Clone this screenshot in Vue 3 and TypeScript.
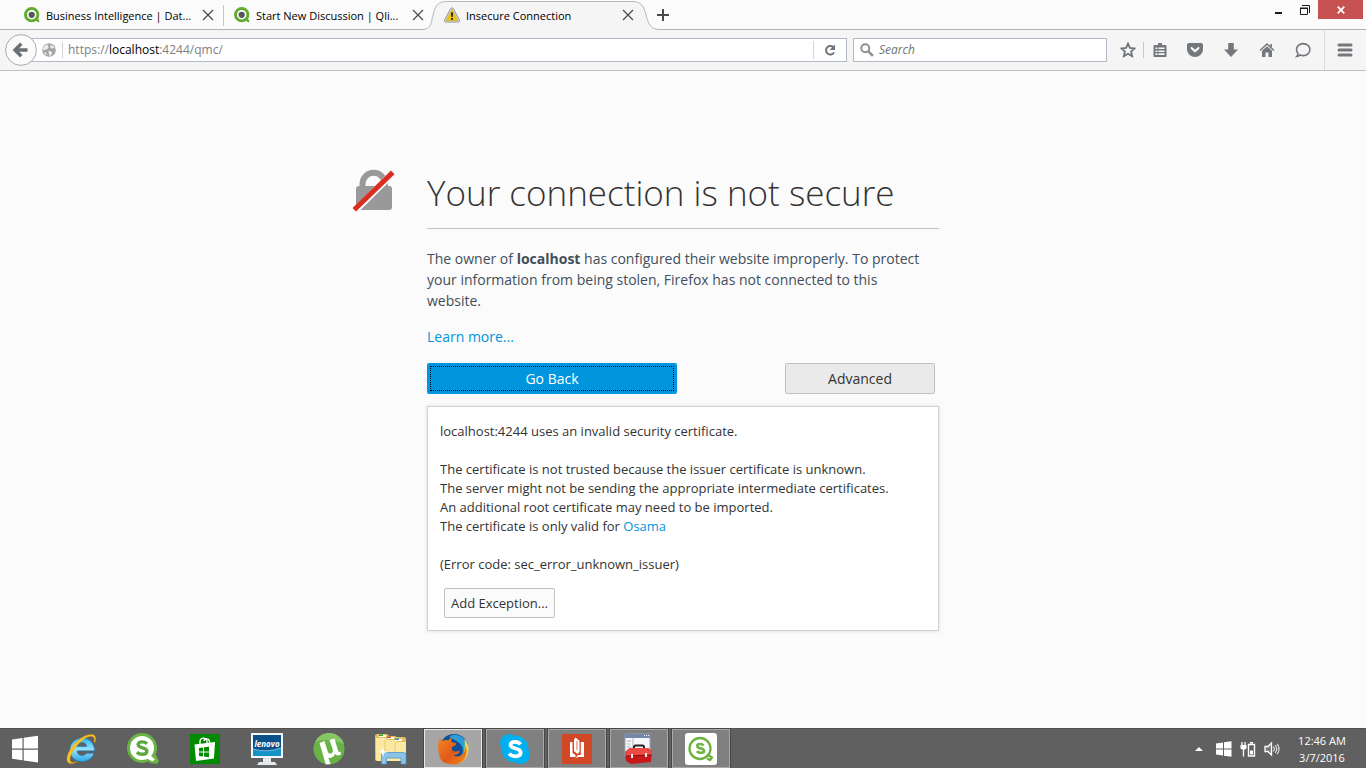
<script setup lang="ts">
import { ref } from 'vue'

interface Tab {
  title: string
  icon: 'qlik' | 'warning'
  active: boolean
}

const tabs: Tab[] = [
  { title: 'Business Intelligence | Dat...', icon: 'qlik', active: false },
  { title: 'Start New Discussion | Qli...', icon: 'qlik', active: false },
  { title: 'Insecure Connection', icon: 'warning', active: true },
]

const address = ref('https://localhost:4244/qmc/')
const editing = ref(false)
const query = ref('')
const showDetails = ref(true)

const apps: { name: string; state: 'idle' | 'open' | 'current' }[] = [
  { name: 'Internet Explorer', state: 'idle' },
  { name: 'Qlik Sense', state: 'idle' },
  { name: 'Store', state: 'idle' },
  { name: 'Lenovo', state: 'idle' },
  { name: 'uTorrent', state: 'idle' },
  { name: 'File Explorer', state: 'idle' },
  { name: 'Firefox', state: 'current' },
  { name: 'Skype', state: 'open' },
  { name: 'Reader', state: 'open' },
  { name: 'Toolbox', state: 'open' },
  { name: 'Qlik Sense Desktop', state: 'open' },
]
</script>

<template>
  <div class="window">
    <header class="tabstrip">
      <div class="tabs">
        <div v-for="tab in tabs" :key="tab.title" class="tab" :class="{ active: tab.active }">
          <svg v-if="tab.active" class="tab-shape" width="240" height="30" viewBox="0 0 240 30" aria-hidden="true">
            <path d="M2 30V29.5C12 29.5 11 22 13 15C15 6 18 1.5 27 1.5H212C221 1.5 224 6 226 15C228 22 230 29.5 239 29.5V30Z" fill="#f5f5f5" />
            <path d="M2 29.5C12 29.5 11 22 13 15C15 6 18 1.5 27 1.5H212C221 1.5 224 6 226 15C228 22 230 29.5 239 29.5" fill="none" stroke="#b1b9bf" />
          </svg>
          <svg v-if="tab.icon === 'qlik'" class="favicon" width="16" height="16" viewBox="0 0 16 16" aria-hidden="true">
            <circle cx="7.7" cy="7.7" r="6.2" fill="#fff" stroke="#62ac32" stroke-width="2.9" />
            <path d="M11 13.2l2.5-2.2 2 3-.8 1.5z" fill="#62ac32" />
            <circle cx="7.7" cy="7.8" r="3.1" fill="#575756" />
          </svg>
          <svg v-else class="favicon" width="16" height="16" viewBox="0 0 16 16" aria-hidden="true">
            <path d="M8 .8c.7 0 1.1.4 1.5 1l5.900 11c.6 1.300 0 2.300-1.200 2.300H1.800C.6 15.100 0 14.100.6 12.800l5.900-11c.4-.6.8-1 1.500-1z" fill="#d9d9d9" stroke="#858585" stroke-width=".8" />
            <path d="M8 2.700L13.800 13.600H2.200z" fill="#f2c80e" stroke="#c79a00" stroke-width=".5" />
            <path d="M7 5.500h2l-.4 4.500H7.400zM7.100 11h1.800v1.700H7.100z" fill="#111" />
          </svg>
          <span class="tab-title">{{ tab.title }}</span>
          <button class="tab-close" :aria-label="`Close ${tab.title}`">
            <svg width="12" height="12" viewBox="0 0 12 12"><path d="M1 1l10 10M11 1L1 11" stroke="#4d4d4d" stroke-width="1.300" /></svg>
          </button>
        </div>
        <button class="new-tab" aria-label="New tab">
          <svg width="14" height="14" viewBox="0 0 14 14"><path d="M7 1v12M1 7h12" stroke="#4a4a4a" stroke-width="2" /></svg>
        </button>
      </div>
      <div class="window-buttons">
        <button class="min" aria-label="Minimize">
          <svg width="10" height="12" viewBox="0 0 10 12"><path d="M1 8h7v2H1z" fill="#1c1c1c" /></svg>
        </button>
        <button class="restore" aria-label="Restore">
          <svg width="12" height="12" viewBox="0 0 12 12"><path d="M3 1.500h7.500V9" fill="none" stroke="#1c1c1c" /><path d="M1.500 4.500h7v6h-7z" fill="none" stroke="#1c1c1c" /><path d="M1 3.500h8v1.500H1z" fill="#1c1c1c" /></svg>
        </button>
        <button class="close" aria-label="Close window">
          <svg width="8" height="8" viewBox="0 0 8 8"><path d="M.7.7l6.600 6.600M7.300.7L.7 7.300" stroke="#fff" stroke-width="1.800" /></svg>
        </button>
      </div>
    </header>

    <nav class="toolbar" aria-label="Navigation">
      <button class="back" aria-label="Back">
        <svg width="32" height="32" viewBox="0 0 32 32"><circle cx="16" cy="16" r="15.400" fill="#fbfbfb" stroke="#a3abb2" /><path d="M22.500 16H11M16.300 9.800L10 16l6.300 6.200" fill="none" stroke="#6a7076" stroke-width="3.400" /></svg>
      </button>
      <div class="urlbar">
        <svg class="globe" width="14" height="14" viewBox="0 0 14 14" aria-hidden="true"><circle cx="7" cy="7" r="6.800" fill="#a4a4a4" /><path d="M2 3.500C3.300 2 5 1.200 6.300 1.500L5.500 3l1.400 1.200-1.700 2-2 .3L1.500 7.700 1 5.500zM8.500 2l2.500.8 1.700 2.700-1.500-.5-1.700.7L8.200 4zM6.500 8l2.600.2 1.200 1.600-1.500 2.800-1.500.2-.5-2.300zM2 9l2.300.8.7 2.300L3 11.200z" fill="#ededed" /></svg>
        <div class="address">
          <div v-if="!editing" class="address-view" aria-hidden="true">https://<b>localhost</b>:4244/qmc/</div>
          <input v-model="address" class="address-input" :class="{ editing }" type="text" aria-label="Address" @focus="editing = true" @blur="editing = false" />
        </div>
        <button class="reload" aria-label="Reload">
          <svg width="14" height="14" viewBox="0 0 14 14"><path d="M11 9.500A4.300 4.300 0 1 1 10.200 4" fill="none" stroke="#6e7479" stroke-width="2" /><path d="M12 1.500V7H6.600z" fill="#6e7479" /></svg>
        </button>
      </div>
      <label class="search">
        <svg width="14" height="14" viewBox="0 0 14 14" aria-hidden="true"><circle cx="5.300" cy="5.300" r="4" fill="none" stroke="#909090" stroke-width="2" /><path d="M8.300 8.300l4.600 4.600" stroke="#909090" stroke-width="2.600" /></svg>
        <input v-model="query" type="search" placeholder="Search" aria-label="Search" />
      </label>
      <div class="tools">
        <button class="tool star" aria-label="Bookmark this page">
          <svg width="16" height="16" viewBox="0 0 16 16"><path d="M8 1.600l1.900 4.300 4.700.5-3.500 3.100 1 4.700L8 11.800l-4.100 2.400 1-4.700L1.400 6.400l4.700-.5z" fill="none" stroke="#717579" stroke-width="1.800" /></svg>
        </button>
        <button class="tool list" aria-label="Bookmarks">
          <svg width="16" height="16" viewBox="0 0 16 16"><path d="M6 1h4v2h3.500Q14.500 3 14.500 4v10q0 1-1 1h-11q-1 0-1-1V4q0-1 1-1H6z" fill="#74787d" /><path d="M3.500 5.500h2v1.600h-2zM6.500 5.500h6v1.600h-6zM3.500 8.400h2V10h-2zM6.500 8.400h6V10h-6zM3.500 11.300h2v1.600h-2zM6.500 11.300h6v1.600h-6z" fill="#f6f6f6" /></svg>
        </button>
        <button class="tool" aria-label="Save to Pocket">
          <svg width="16" height="16" viewBox="0 0 16 16"><path d="M2 1h12q2 0 2 2v4.500a8 7.500 0 0 1-16 0V3Q0 1 2 1z" fill="#74787d" /><path d="M4.500 6L8 9.300 11.500 6" fill="none" stroke="#fff" stroke-width="2" stroke-linecap="round" stroke-linejoin="round" /></svg>
        </button>
        <button class="tool" aria-label="Downloads">
          <svg width="16" height="16" viewBox="0 0 16 16"><path d="M5.200 1h5.600v6.500H15L8 15 1 7.500h4.200z" fill="#74787d" /></svg>
        </button>
        <button class="tool" aria-label="Home">
          <svg width="16" height="16" viewBox="0 0 16 16"><path d="M1 8.500L8 2l7 6.500" fill="none" stroke="#74787d" stroke-width="1.500" /><path d="M8 4.300l5 4.500V15H9.500v-4.500h-3V15H3V8.800z" fill="#74787d" /><path d="M11.300 2H13v3.500L11.300 4z" fill="#74787d" /></svg>
        </button>
        <button class="tool" aria-label="Hello">
          <svg width="16" height="16" viewBox="0 0 16 16"><path d="M8.200 1.600c3.800 0 6.700 2.600 6.700 6s-2.900 6-6.700 6c-1.200 0-2.200-.3-3.100-.7-.8.900-1.900 1.500-3.400 1.600.8-.9 1.200-1.900 1.300-3C2 10.500 1.500 9.100 1.500 7.600c0-3.400 2.900-6 6.700-6z" fill="none" stroke="#74787d" stroke-width="1.600" /></svg>
        </button>
        <button class="tool menu" aria-label="Open menu">
          <svg width="16" height="16" viewBox="0 0 16 16"><path d="M2 3h12M2 8h12M2 13h12" stroke="#74787d" stroke-width="3" stroke-linecap="round" /></svg>
        </button>
      </div>
    </nav>

    <main class="page">
      <section class="notice">
        <div class="heading">
          <svg class="lock" width="44" height="44" viewBox="0 0 44 44" aria-hidden="true">
            <path d="M10.500 20V15a11.200 11.200 0 0 1 22.400 0v5" fill="none" stroke="#999" stroke-width="6" />
            <rect x="4" y="17" width="36" height="24" rx="3" fill="#999" />
            <path d="M-.5 40.500L40 0l5 5L4.500 45z" fill="#fbfbfb" />
            <path d="M.5 39L39 1.500 42.500 5.300 4 42.500z" fill="#d92d21" />
          </svg>
          <h1>Your connection is not secure</h1>
        </div>
        <p class="intro">The owner of <b>localhost</b> has configured their website improperly. To protect your information from being stolen, Firefox has not connected to this website.</p>
        <p class="more"><a href="#learn">Learn more...</a></p>
        <div class="actions">
          <button class="go-back">Go Back</button>
          <button class="advanced" @click="showDetails = !showDetails">Advanced</button>
        </div>
        <div v-if="showDetails" class="details">
          <p>localhost:4244 uses an invalid security certificate.</p>
          <p>
            The certificate is not trusted because the issuer certificate is unknown.<br />
            The server might not be sending the appropriate intermediate certificates.<br />
            An additional root certificate may need to be imported.<br />
            The certificate is only valid for <a href="#osama">Osama</a>
          </p>
          <p>(Error code: sec_error_unknown_issuer)</p>
          <button class="exception">Add Exception...</button>
        </div>
      </section>
    </main>

    <footer class="taskbar">
      <button class="start" aria-label="Start">
        <svg width="28" height="28" viewBox="0 0 28 28"><path d="M1 4.500l10.500-1.600v10.600H1zM12.700 2.700L27 .7v12.800H12.700zM1 14.700h10.500v10.600L1 23.700zM12.700 14.700H27v12.800l-14.300-2z" fill="#fff" /></svg>
      </button>
      <div class="apps">
        <button v-for="app in apps" :key="app.name" class="app" :class="app.state" :aria-label="app.name">
          <svg v-if="app.name === 'Internet Explorer'" width="32" height="32" viewBox="0 0 32 32">
            <defs><linearGradient id="ie" x1="0" y1="0" x2="0" y2="1"><stop offset="0" stop-color="#2fb4ed" /><stop offset=".5" stop-color="#9be3fc" /><stop offset="1" stop-color="#29a7e5" /></linearGradient></defs>
            <path d="M29.500 17.800H12c.2 3 2.200 4.800 4.900 4.800 2 0 3.500-.8 4.400-2.300h7.600c-1.700 5-6 8.200-12 8.200C9.800 28.500 5 23.700 5 17S9.900 5 17 5s12.500 4.900 12.500 12.800zM12.200 13.500h9.600c-.3-2.500-2.200-4-4.700-4s-4.400 1.500-4.900 4z" fill="url(#ie)" stroke="#1682bf" stroke-width=".6" fill-rule="evenodd" />
            <path d="M30 9.500c1.300-4.500.5-7.500-2.500-8C22 .7 13.500 5.500 8 12.500 2.500 19.500.5 26.500 3 29.300c1.900 2.200 5.500 1.300 9.300-.9-3.400 1.300-5.700 1.400-6.700.1-1.700-2.300.5-8.500 5.600-15C16.500 7 22.800 2.900 26.500 3.300c2.500.3 3.400 2.500 2.600 5.700z" fill="#f7c228" stroke="#d89a0c" stroke-width=".4" />
          </svg>
          <svg v-else-if="app.name === 'Qlik Sense'" width="32" height="32" viewBox="0 0 32 32">
            <circle cx="15" cy="15" r="15" fill="#68b545" /><path d="M19 25l8-7 5 10-2 3-7-1z" fill="#68b545" />
            <circle cx="15" cy="15" r="12" fill="#fff" /><path d="M22 21l6 5.500-2.500 2L19 25z" fill="#fff" />
            <path d="M20 10.800c-1.500-1.300-3.200-1.900-5-1.900-2.400 0-3.900 1-3.900 2.700 0 4.400 8.800 2 8.800 6.600 0 2-1.800 3-4.500 3-2.200 0-4.200-.7-5.500-2" fill="none" stroke="#5fa83f" stroke-width="3.400" />
          </svg>
          <svg v-else-if="app.name === 'Store'" width="30" height="30" viewBox="0 0 30 30">
            <path d="M0 0h30v30H0z" fill="#008a00" /><path d="M4.500 10.500L25 8l-1 16.500L6 27z" fill="#fff" /><path d="M10 11V7.500q0-3 3-3.300Q16.500 4 17 7v3M14 7q.5-2.500 3-2.200 2.300.2 2.500 3v1" fill="none" stroke="#fff" stroke-width="1.300" />
            <path d="M9 14l4-.5v4H9zM14 13.300l5-.6v4.800h-5zM9 18.500h4v4l-4-.4zM14 18.500h5v4.800l-5-.7z" fill="#008a00" />
          </svg>
          <svg v-else-if="app.name === 'Lenovo'" width="32" height="32" viewBox="0 0 32 32">
            <path d="M0 0h32v25H0z" fill="#f4f7f9" /><path d="M2 2h28v21H2z" fill="#0a5089" /><path d="M2 16q14 4 28-1v8H2z" fill="#1592c8" /><path d="M2 16q14 4 28-1" fill="none" stroke="#9fd4ee" stroke-width=".7" />
            <path d="M12 25h8v4h4l2 3H6l2-3h4z" fill="#e5e8ea" />
            <text x="16" y="14" text-anchor="middle" fill="#fff" class="brand">lenovo</text>
          </svg>
          <svg v-else-if="app.name === 'uTorrent'" width="32" height="32" viewBox="0 0 32 32">
            <circle cx="16" cy="16" r="15.500" fill="#67b346" /><path d="M2 9A15.500 15.500 0 0 1 31 11Q16 4 2 9z" fill="#87c665" />
            <path d="M6.500 10l5-2 3 10q1 3.300 3.600 2.500 2.500-.9 1.500-4.500L16.500 7l5-1.500 3.500 12q.7 2 2.500 1.300l.5 2.500q-3.800 2.500-6-.3-.7 3-3.700 3.700-2 .5-3-.2l2.300 6.500-4.800.5z" fill="#fff" />
          </svg>
          <svg v-else-if="app.name === 'File Explorer'" width="32" height="32" viewBox="0 0 32 32">
            <path d="M0 3q0-2 2-2h10l2 2h6l2 1h7q2 0 2 2v20q0 2-2 2H2q-2 0-2-2z" fill="#e3bf60" />
            <path d="M4 2h7v2H4zM12 4h7v2h-7zM20 6h7v2h-7z" fill="#fff" /><path d="M4 1.500h4V3H4z" fill="#28a745" /><path d="M12 3.500h4V5h-4z" fill="#d8402f" /><path d="M20 5.500h4V7h-4z" fill="#3388ce" />
            <path d="M1 5h9l2 2h7l2 2h10v17q0 2-2 2H3q-2 0-2-2z" fill="#fbe9a2" /><path d="M10 7v19M20 9v17" stroke="#e8cb7a" />
            <path d="M6.500 31V22q0-2.500 2.500-2.500h19.500q2.500 0 2.500 2.500v9h-5v-6H11.500v6z" fill="#8bc4e8" stroke="#4c97c8" stroke-width=".8" />
            <path d="M8 14l1 4 4 1-4 1-1 4-1-4-4-1 4-1z" fill="#fff" />
          </svg>
          <svg v-else-if="app.name === 'Firefox'" width="32" height="32" viewBox="0 0 32 32">
            <defs><linearGradient id="fx" x1="0" y1="0" x2="1" y2="1"><stop offset="0" stop-color="#f08a1d" /><stop offset=".55" stop-color="#e2581a" /><stop offset="1" stop-color="#f08c1c" /></linearGradient></defs>
            <circle cx="17" cy="15" r="14" fill="#114f96" /><path d="M12 3.500Q18 0 25 4q6 5 5 14l-5 5q3-10-4-14z" fill="#2a9fd8" />
            <path d="M27.500 6q4 4.500 4 10.500c-.3 8.500-6.500 14.500-15 14.500q11-5 11-15 .8-5 0-10z" fill="#fbd648" />
            <path d="M2.500 5.500Q4 5 5.500 8q3-1.500 6-.7 2-2.800 4.200-3-1.700 2-1.500 4.300 1 1.400 5 1.500.3 2-3.700 3.600-1.500 2.300.2 4 2.300 1.600 5.300.3 1.700-.2 1.700 1.100-2 3-6.200 3.100 5 3 9.500-1.500 3-3.500 2-8.200 2.500 4.500 1 9.500-2 7-9 9.200-13 1.500-17-6Q-.5 14 2.500 5.500z" fill="url(#fx)" />
          </svg>
          <svg v-else-if="app.name === 'Skype'" width="32" height="32" viewBox="0 0 32 32">
            <circle cx="10" cy="10" r="9" fill="#00aff0" /><circle cx="22" cy="22" r="9" fill="#00aff0" /><circle cx="16" cy="16" r="13.500" fill="#00aff0" />
            <path d="M21.500 11.300c-1.300-1.700-3.200-2.500-5.500-2.500-2.700 0-4.500 1.200-4.500 3 0 4.900 10.200 2.400 10.200 7.800 0 2.300-2.200 3.700-5.400 3.700-2.700 0-4.800-1-6-2.900" fill="none" stroke="#fff" stroke-width="3.800" />
          </svg>
          <svg v-else-if="app.name === 'Reader'" width="30" height="30" viewBox="0 0 30 30">
            <path d="M0 0h30v30H0z" fill="#d24726" /><path d="M8 8h2.500v11l3 2v2H8zM12 5.500l1.500-2 4 3.500v11l-2 2-3.500-3zM18.800 8H22v15h-6l-2.800 1.800 2.800-3.800h2.800z" fill="#fff" /><path d="M15 7v9" stroke="#d24726" stroke-width=".8" />
          </svg>
          <svg v-else-if="app.name === 'Toolbox'" width="32" height="32" viewBox="0 0 32 32">
            <path d="M2 1h25v22H2z" fill="#f5f7fa" stroke="#9ba6b5" /><path d="M2 1h25v4H2z" fill="#7489aa" /><path d="M21 2h1v1h-1zM23 2h1v1h-1zM25 2h1v1h-1z" fill="#fff" /><path d="M4 8h4M4 11h3M4 14h4M4 17h3M10 5v17" stroke="#aeb5bf" />
            <path d="M11 16v-2q0-1.500 1.500-1.500h7q1.500 0 1.500 1.500v2" fill="none" stroke="#222" stroke-width="2" />
            <path d="M2 19l5-4h18l4 3-1 11-20 2-5-3z" fill="#c91819" /><path d="M2 19l5-4h18l4 3v4L3 23z" fill="#ed4945" /><path d="M3 23l26-1" stroke="#8e1010" /><path d="M8 21h2v4H8zM22 20h2v4h-2z" fill="#eee" />
          </svg>
          <svg v-else width="32" height="32" viewBox="0 0 32 32">
            <rect width="32" height="32" rx="3" fill="#fff" /><circle cx="15" cy="15.500" r="10.500" fill="none" stroke="#6cb33f" stroke-width="2.300" /><path d="M21 23l3-.5 3 2-2 2.500-3-1.500" fill="none" stroke="#6cb33f" stroke-width="2.200" />
            <path d="M18.700 12.300c-2.100-1.700-6.400-1.800-6.400.6 0 3.400 6.800 1.700 6.800 4.900 0 2.600-4.900 2.600-7.300.4" fill="none" stroke="#6cb33f" stroke-width="2.600" />
          </svg>
        </button>
      </div>
      <div class="tray">
        <button class="more-icons" aria-label="Show hidden icons"><svg width="8" height="16" viewBox="0 0 8 16"><path d="M0 10l4-4 4 4z" fill="#fff" /></svg></button>
        <button aria-label="Windows"><svg width="16" height="16" viewBox="0 0 16 16"><path d="M0 2.500l7-1v6H0zM8 1.300L15.500.2v7.300H8zM0 8.500h7v6l-7-1zM8 8.500h7.500v7.300L8 14.700z" fill="#fff" /></svg></button>
        <button aria-label="Battery"><svg width="16" height="16" viewBox="0 0 16 16"><path d="M2 1v3M5 1v3M3.500 8v7.500" stroke="#fff" stroke-width="1.300" /><path d="M.5 4h6v3.500l-1.500 1H2L.5 7.500z" fill="#fff" /><path d="M8.500 3.500h6v11.500h-6zM10 1.800h3" fill="none" stroke="#fff" stroke-width="1.400" /><path d="M10 9.500h3v4h-3z" fill="#fff" /></svg></button>
        <button aria-label="Volume"><svg width="16" height="16" viewBox="0 0 16 16"><path d="M1 5.500h3L7.500 2v12L4 10.500H1z" fill="#777" stroke="#fff" stroke-width="1.300" /><path d="M9.500 5.500q1.700 2.500 0 5M11.500 4q2.700 4 0 8M13.300 2.800q3.500 5.200 0 10.400" fill="none" stroke="#fff" /></svg></button>
        <time class="clock" datetime="2016-03-07T00:46"><span>12:46 AM</span><span>3/7/2016</span></time>
      </div>
    </footer>
  </div>
</template>

<style>
body {
  margin: 0;
}
</style>

<style scoped>
.window {
  min-height: 100vh;
  display: flex;
  flex-direction: column;
  background: #fbfbfb;
  color: #333;
  font-family: "Open Sans", "Noto Sans", sans-serif;
}
* {
  box-sizing: border-box;
}
button,
input {
  font: inherit;
  color: inherit;
}
button {
  padding: 0;
  border: 0;
  background: none;
}
svg {
  display: block;
  flex: none;
}
a {
  color: #0095dd;
  text-decoration: none;
}
.tabstrip {
  height: 30px;
  display: flex;
  justify-content: space-between;
  border-bottom: 1px solid #a9b4bc;
}
.tabs {
  display: flex;
  padding-left: 14px;
}
.tab {
  position: relative;
  width: 210px;
  height: 30px;
  padding: 0 10px;
  display: flex;
  align-items: center;
  gap: 6px;
  color: #000;
  font-size: 11px;
}
.tab:first-child::after {
  content: "";
  position: absolute;
  right: 0;
  top: 5px;
  width: 1px;
  height: 21px;
  background: #c6c6c6;
}
.tab-shape {
  position: absolute;
  left: -14px;
  top: 0;
}
.favicon,
.tab-title,
.tab-close {
  position: relative;
}
.tab-title {
  flex: 1;
  white-space: nowrap;
}
.new-tab {
  margin-left: 12px;
}
.window-buttons {
  display: flex;
  align-items: flex-start;
  padding-right: 3px;
}
.window-buttons button {
  height: 19px;
  display: grid;
  place-items: center;
}
.min,
.restore {
  width: 26px;
}
.window-buttons .close {
  width: 45px;
  background: #c75050;
}
.toolbar {
  height: 41px;
  display: flex;
  align-items: center;
  padding-left: 5px;
  background: #f5f5f5;
  border-bottom: 1px solid #c1c1c1;
}
.back {
  position: relative;
  z-index: 1;
}
.urlbar,
.search {
  height: 24px;
  display: flex;
  align-items: center;
  background: #fff;
  border: 1px solid #b1bac4;
  font-size: 12px;
}
.urlbar {
  flex: 1;
  margin-left: -6px;
  padding-left: 10px;
}
.address {
  position: relative;
  flex: 1;
  height: 16px;
  margin-left: 6px;
  padding-left: 5px;
  border-left: 1px solid #d0d0d0;
}
.address-view {
  position: absolute;
  left: 5px;
  top: 0;
  line-height: 16px;
  color: #808080;
  pointer-events: none;
}
.address-view b {
  font-weight: 400;
  color: #000;
}
.address-input,
.search input {
  display: block;
  width: 100%;
  height: 16px;
  padding: 0;
  border: 0;
  outline: 0;
  background: none;
  line-height: 16px;
}
.address-input {
  color: transparent;
}
.address-input.editing {
  color: #000;
}
.reload {
  width: 33px;
  height: 18px;
  display: grid;
  place-items: center;
  border-left: 1px solid #d5d5d5;
}
.search {
  width: 254px;
  margin-left: 6px;
  padding: 0 6px;
  gap: 5px;
}
.search input::placeholder {
  color: #737373;
  font-style: italic;
  opacity: 1;
}
.tools {
  display: flex;
  align-items: center;
  align-self: stretch;
  padding-left: 12px;
}
.tool {
  width: 36px;
  height: 100%;
  display: grid;
  place-items: center;
}
.star {
  width: 18px;
}
.list {
  width: 34px;
  height: 16px;
  margin-left: 6px;
  padding-right: 2px;
  border-left: 1px solid #c8c8c8;
}
.menu {
  width: 42px;
  margin-left: 3px;
  padding-right: 2px;
  border-left: 1px solid #dcdcdc;
}
.page {
  flex: 1;
  display: flex;
  justify-content: center;
  align-items: flex-start;
  padding: 97px 80px 40px;
}
.notice {
  width: 100%;
  max-width: 512px;
}
.heading {
  position: relative;
  height: 61px;
  border-bottom: 1px solid #c1c1c1;
}
.lock {
  position: absolute;
  left: -75px;
  top: 1px;
}
h1 {
  margin: 0;
  font-size: 35px;
  font-weight: 300;
  line-height: 50px;
  white-space: nowrap;
}
.intro,
.more {
  margin: 19px 0 0;
  font-size: 14px;
  line-height: 21px;
}
.intro {
  padding-right: 12px;
  color: #424f5a;
}
.more {
  margin-top: 15px;
}
.actions {
  display: flex;
  justify-content: space-between;
  margin-top: 16px;
  padding-right: 4px;
}
.actions button {
  height: 31px;
  border-radius: 2px;
  font-size: 14px;
}
.actions .go-back {
  width: 250px;
  background: #0095dd;
  color: #fff;
  outline: 1px dotted #000;
  outline-offset: -4px;
}
.actions .advanced {
  width: 150px;
  background: #eaeaea;
  border: 1px solid #c1c1c1;
}
.details {
  margin-top: 12px;
  padding: 15px 12px 12px;
  background: #fff;
  border: 1px solid #d1d1d1;
  box-shadow: 0 0 4px #ddd;
  font-size: 13px;
  line-height: 19px;
}
.details p {
  margin: 0 0 19px;
}
.details p:last-of-type {
  margin-bottom: 14px;
}
.exception {
  display: block;
  height: 30px;
  margin-left: 4px;
  padding: 0 6px;
  background: #fbfbfb;
  border: 1px solid #c1c1c1;
  border-radius: 2px;
}
.taskbar {
  height: 40px;
  display: flex;
  align-items: stretch;
  background: #606060;
  border-top: 1px solid #505050;
  color: #fff;
}
.start {
  width: 52px;
  padding-right: 2px;
  display: grid;
  place-items: center;
}
.apps {
  display: flex;
  gap: 4px;
}
.app {
  width: 58px;
  display: grid;
  place-items: center;
  border: 1px solid transparent;
}
.app.open {
  background: #808080;
  border-color: #a8a8a8;
  box-shadow: 0 0 0 1px #484848;
}
.app.current {
  background: #a6a6a6;
  border-color: #e8e8e8;
  box-shadow: 0 0 0 1px #484848;
}
.brand {
  font: italic bold 8px "Open Sans", sans-serif;
}
.tray {
  margin-left: auto;
  display: flex;
  align-items: center;
  gap: 8px;
  padding-right: 18px;
}
.more-icons {
  margin-right: 5px;
}
.clock {
  width: 52px;
  margin-left: 8px;
  display: flex;
  flex-direction: column;
  align-items: center;
  font-size: 11px;
  line-height: 17px;
  white-space: nowrap;
}
</style>
